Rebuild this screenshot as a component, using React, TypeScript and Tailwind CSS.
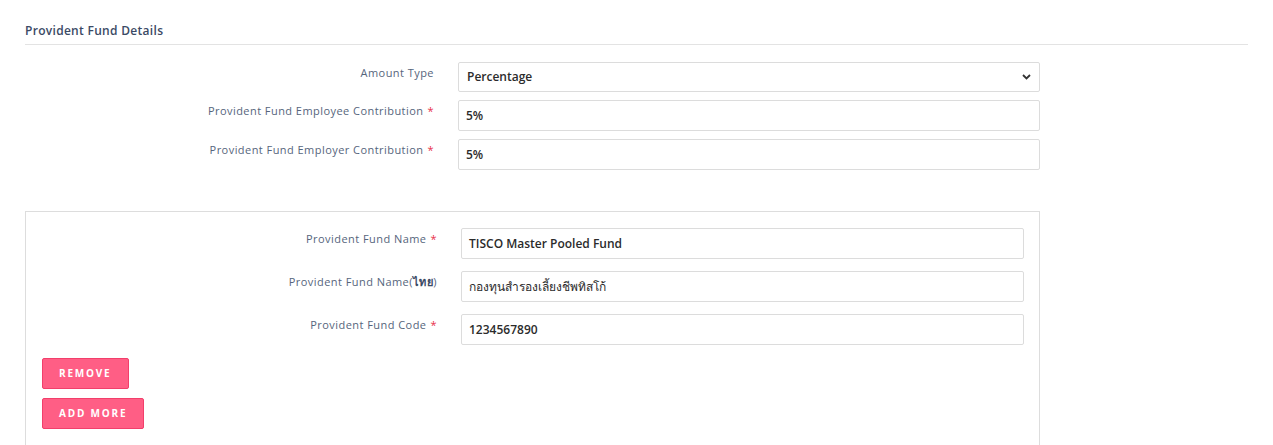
const font = { fontFamily: '"Open Sans", "Noto Sans", sans-serif' };

function Label({ text, required, w }: { text: React.ReactNode; required?: boolean; w: string }) {
  return (
    <div className={`${w} shrink-0 text-right text-[11px] tracking-[0.45px] text-[#56657c] pt-[3px]`}>
      {text}
      {required && <span className="text-[#e8304a] ml-[4px]">*</span>}
    </div>
  );
}

function Field({ value, w, thin }: { value: string; w: string; thin?: boolean }) {
  return (
    <div
      className={`${w} h-[31px] border border-[#dcdcdc] rounded-[2px] flex items-center px-[7px] text-[12px] text-[#2b2b2b] ${
        thin ? "font-normal" : "font-semibold"
      }`}
    >
      {value}
    </div>
  );
}

export default function App() {
  return (
    <div className="w-[1273px] h-[445px] bg-white overflow-hidden pl-[25px] pr-[25px] pt-[22px]" style={font}>
      <div className="text-[12px] font-semibold text-[#3b4a65] tracking-[0.3px] pb-[4px] border-b border-[#e3e3e3]">
        Provident Fund Details
      </div>

      <div className="flex flex-col gap-[8px] mt-[17px]">
        <div className="flex gap-[24px]">
          <Label w="w-[409px]" text="Amount Type" />
          <div className="w-[582px] h-[30px] border border-[#dcdcdc] rounded-[2px] flex items-center justify-between px-[8px] text-[12px] font-semibold text-[#2b2b2b]">
            <span>Percentage</span>
            <svg width="9" height="6" viewBox="0 0 9 6">
              <path d="M1 1l3.5 3.5L8 1" stroke="#333" strokeWidth="1.8" fill="none" />
            </svg>
          </div>
        </div>
        <div className="flex gap-[24px]">
          <Label w="w-[409px]" text="Provident Fund Employee Contribution" required />
          <Field w="w-[582px]" value="5%" />
        </div>
        <div className="flex gap-[24px]">
          <Label w="w-[409px]" text="Provident Fund Employer Contribution" required />
          <Field w="w-[582px]" value="5%" />
        </div>
      </div>

      <div className="w-[1015px] mt-[41px] border border-[#dddddd] pt-[16px] pl-[16px] pb-[20px]">
        <div className="flex flex-col gap-[12px]">
          <div className="flex gap-[24px]">
            <Label w="w-[395px]" text="Provident Fund Name" required />
            <Field w="w-[563px]" value="TISCO Master Pooled Fund" />
          </div>
          <div className="flex gap-[24px]">
            <Label
              w="w-[395px]"
              text={
                <>
                  Provident Fund Name(<span className="font-bold text-[#3b4a65]">ไทย</span>)
                </>
              }
            />
            <Field w="w-[563px]" value="กองทุนสำรองเลี้ยงชีพทิสโก้" thin />
          </div>
          <div className="flex gap-[24px]">
            <Label w="w-[395px]" text="Provident Fund Code" required />
            <Field w="w-[563px]" value="1234567890" />
          </div>
        </div>
        <div className="flex flex-col items-start gap-[9px] mt-[13px]">
          <button className="h-[31px] px-[16px] bg-[#ff5e85] border border-[#f23f6b] rounded-[2px] text-white text-[10px] font-bold tracking-[1.8px]">
            REMOVE
          </button>
          <button className="h-[31px] px-[16px] bg-[#ff5e85] border border-[#f23f6b] rounded-[2px] text-white text-[10px] font-bold tracking-[1.8px]">
            ADD MORE
          </button>
        </div>
      </div>
    </div>
  );
}
